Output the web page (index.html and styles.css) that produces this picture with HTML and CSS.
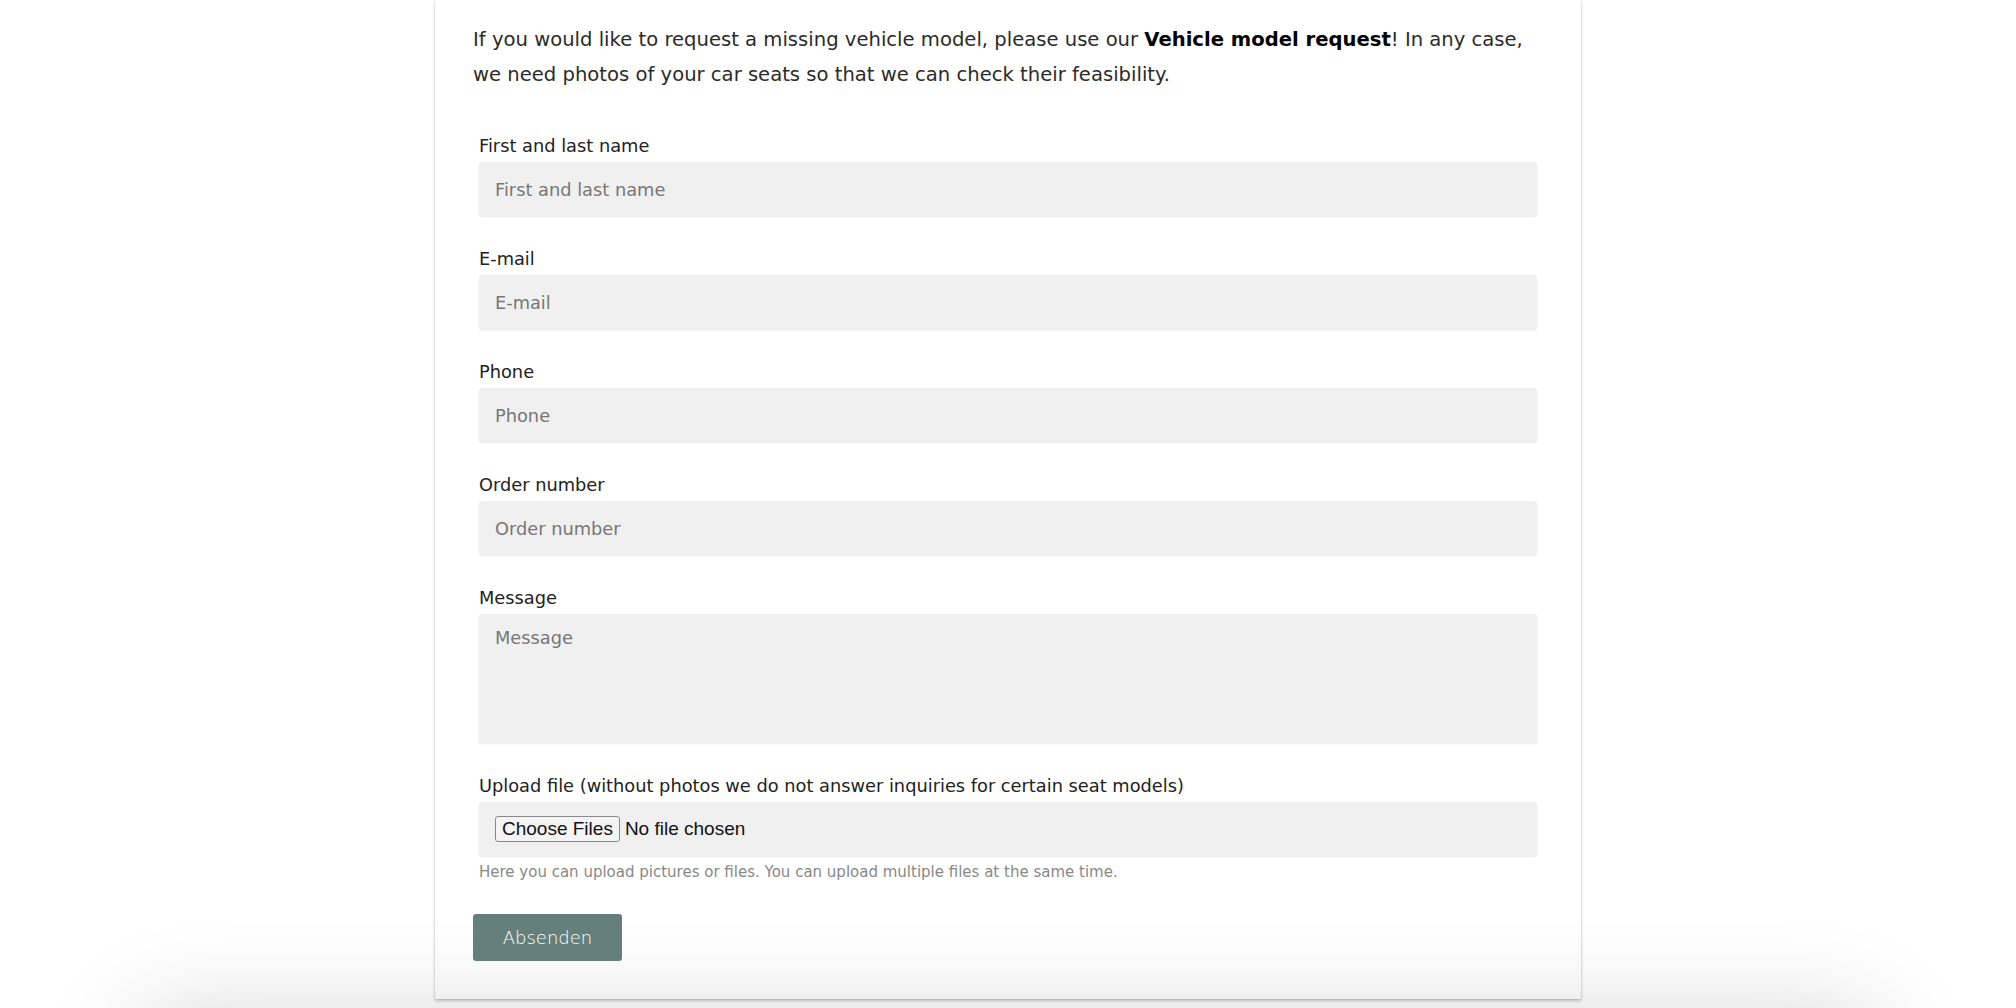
FILE: index.html
```html
<!DOCTYPE html>
<html lang="en">
<head>
    <meta charset="UTF-8">
    <meta name="viewport" content="width=device-width, initial-scale=1.0">
    <title>Contact</title>
    <link rel="stylesheet" href="styles.css">
</head>
<body>
    <div class="card">
        <p class="intro">If you would like to request a missing vehicle model, please use our <strong>Vehicle model request</strong>! In any case, we need photos of your car seats so that we can check their feasibility.</p>
        <form id="contact-form" action="#" method="post" enctype="multipart/form-data">
            <div class="fields">
                <div class="group">
                    <label for="name">First and last name</label>
                    <input type="text" id="name" name="name" placeholder="First and last name">
                </div>
                <div class="group">
                    <label for="email">E-mail</label>
                    <input type="email" id="email" name="email" placeholder="E-mail">
                </div>
                <div class="group">
                    <label for="phone">Phone</label>
                    <input type="tel" id="phone" name="phone" placeholder="Phone">
                </div>
                <div class="group">
                    <label for="order">Order number</label>
                    <input type="text" id="order" name="order" placeholder="Order number">
                </div>
                <div class="group">
                    <label for="message">Message</label>
                    <textarea id="message" name="message" placeholder="Message"></textarea>
                </div>
                <div class="group last">
                    <label for="files">Upload file (without photos we do not answer inquiries for certain seat models)</label>
                    <div class="file-box">
                        <input type="file" id="files" name="files" multiple>
                    </div>
                    <small class="hint">Here you can upload pictures or files. You can upload multiple files at the same time.</small>
                </div>
            </div>
            <button type="submit" class="send">Absenden</button>
        </form>
    </div>
    <div class="footer"></div>
</body>
</html>
```

FILE: styles.css
```css
html, body {
    overflow: hidden;
}
body {
    margin: 0;
    font-family: "DejaVu Sans", sans-serif;
    color: #222;
    background: #fff;
}
.card {
    width: 1146px;
    margin: 0 auto;
    padding: 23px 38px 38px;
    box-sizing: border-box;
    background: #fff;
    box-shadow: 0 2px 3px rgba(0, 0, 0, 0.22), 0 0 1px rgba(0, 0, 0, 0.25);
}
.intro {
    margin: 0 0 40px;
    font-size: 19.6px;
    line-height: 34.7px;
    color: #2b2b2b;
}
.intro strong {
    color: #000;
}
.fields {
    padding: 0 6px;
}
.group {
    margin-bottom: 29px;
}
.group.last {
    margin-bottom: 32px;
}
label {
    display: block;
    font-size: 17.8px;
    line-height: 24px;
    padding-top: 2px;
    margin-bottom: 4px;
    color: #222;
}
input[type="text"], input[type="email"], input[type="tel"], textarea {
    display: block;
    width: 100%;
    height: 54px;
    padding: 0 16px;
    box-sizing: border-box;
    border: none;
    border-radius: 3px;
    background: #f0f0f0;
    box-shadow: 0 1px 2px rgba(0, 0, 0, 0.09);
    font-family: "DejaVu Sans", sans-serif;
    font-size: 17.8px;
    color: #333;
    outline: none;
}
textarea {
    height: 129px;
    padding-top: 12px;
    line-height: 24px;
    resize: none;
}
::placeholder {
    color: #777;
}
.file-box {
    height: 54px;
    padding: 0 16px;
    display: flex;
    align-items: center;
    border-radius: 3px;
    background: #f0f0f0;
    box-shadow: 0 1px 2px rgba(0, 0, 0, 0.09);
}
.file-box input {
    font-family: "Liberation Sans", Arial, sans-serif;
    font-size: 19px;
    color: #111;
}
.file-box input::file-selector-button {
    font-family: "Liberation Sans", Arial, sans-serif;
    font-size: 19px;
    padding: 1px 6px;
    margin-right: 5px;
    border: 1px solid #8a8a8a;
    border-radius: 3px;
    background: #f4f4f4;
    color: #111;
}
.hint {
    display: block;
    margin-top: 6px;
    font-size: 15px;
    line-height: 20px;
    color: #888;
}
.send {
    width: 149px;
    height: 47px;
    border: none;
    border-radius: 3px;
    background-color: #65807a;
    color: #fff;
    font-family: "DejaVu Sans", sans-serif;
    font-weight: 200;
    font-size: 18px;
    cursor: pointer;
}
.send:hover {
    background-color: #5a756a;
}
.footer {
    height: 200px;
    margin: 20px 140px 0;
    background: #fff;
    box-shadow: 0 0 100px rgba(0, 0, 0, 0.18);
}
```
